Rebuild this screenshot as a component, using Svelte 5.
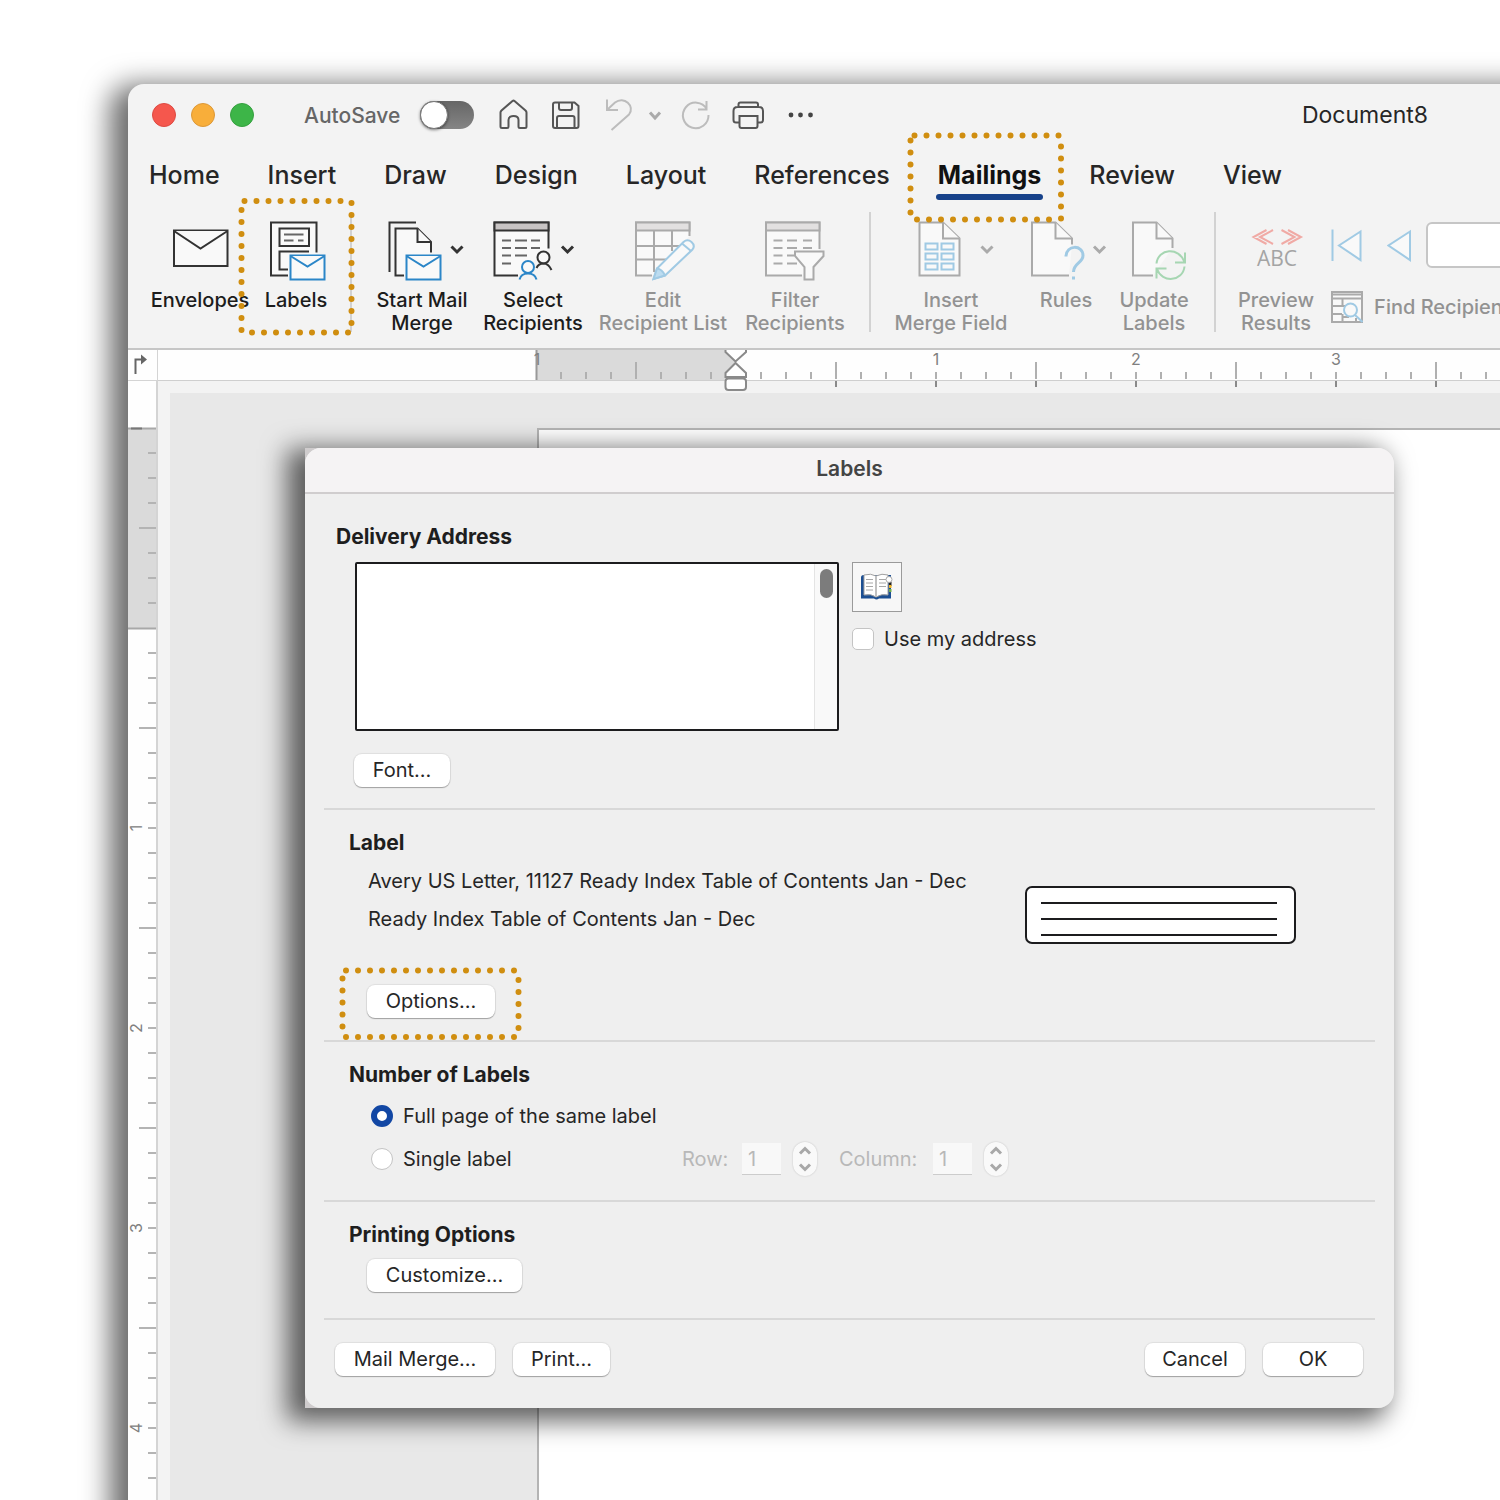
<script>
  const tabs = ['Home', 'Insert', 'Draw', 'Design', 'Layout', 'References', 'Mailings', 'Review', 'View'];

  const range = (from, to, step) => {
    const out = [];
    for (let v = from; v <= to; v += step) out.push(v);
    return out;
  };

  // Ruler marks: one inch is 200 units, with a tick every eighth of an inch.
  const hTicks = range(561, 2611, 25).filter((x) => x !== 736);
  const hStops = range(836, 2536, 100);
  const hNumbers = [1, 2, 3];
  const vTicks = range(453, 2003, 25).filter((y) => y !== 628);
  const vNumbers = [1, 2, 3, 4];

  let autosave = $state(false);
  let useMine = $state(false);
  let mode = $state('full');
  let row = $state('1');
  let column = $state('1');
  let address = $state('');
  let record = $state('');
</script>

{#snippet chevron(x)}
  <path class="chev" d="M{x} 246.5l5.500 5.500l5.500-5.500" />
{/snippet}

{#snippet mail(x)}
  <rect x={x} y="255.500" width="34" height="24" fill="#f8fbfd" />
  <path d="M{x} 256l17 10.500l17-10.500" />
{/snippet}

{#snippet stepper(name)}
  <span class="stepper">
    <button type="button" disabled aria-label="Increase {name}">
      <svg viewBox="0 0 24 17"><path d="M7 11.500l5-5l5 5" /></svg>
    </button>
    <button type="button" disabled aria-label="Decrease {name}">
      <svg viewBox="0 0 24 17"><path d="M7 5.500l5 5l5-5" /></svg>
    </button>
  </span>
{/snippet}

<div class="desktop">
  <main class="window">
    <header class="titlebar">
      <div class="lights">
        <button type="button" class="light red" aria-label="Close"></button>
        <button type="button" class="light amber" aria-label="Minimize"></button>
        <button type="button" class="light green" aria-label="Zoom"></button>
      </div>
      <label class="autosave">
        <span>AutoSave</span>
        <input type="checkbox" role="switch" bind:checked={autosave} />
      </label>
      <div class="quick">
        <button type="button" aria-label="Home">
          <svg width="40" height="34" viewBox="494 98 40 34"><path d="M502 128q-1.500 0-1.500-1.500V112.500q0-1 1-2L512.500 101q1-.8 2 0L525.500 110.500q1 1 1 2V126.500q0 1.500-1.500 1.500H520q-1.500 0-1.500-1.500V120q0-4-5-4t-5 4v6.500q0 1.500-1.500 1.500z" /></svg>
        </button>
        <button type="button" aria-label="Save">
          <svg width="40" height="34" viewBox="546 98 40 34"><path d="M555 102.500H574.500L578.500 106V126q0 2-2 2H555q-2 0-2-2V104.500q0-2 2-2zM559 103V108q0 2 2 2h9q2 0 2-2V103M557 128V118q0-2 2-2H572.500q2 0 2 2V128" /></svg>
        </button>
        <button type="button" class="off" disabled aria-label="Undo">
          <svg width="36" height="34" viewBox="598 98 36 34"><path d="M607 99.500V110H618M607.500 109.500L615 102.500C624 95.500 635.500 106 629 114.500L611.500 130" /></svg>
        </button>
        <button type="button" class="off thick" disabled aria-label="Undo history">
          <svg width="18" height="34" viewBox="646 98 18 34"><path d="M650 112.500l5 5.500l5-5.500" /></svg>
        </button>
        <button type="button" class="off" disabled aria-label="Repeat">
          <svg width="40" height="34" viewBox="676 98 40 34"><path d="M706.500 101V109.500H698M706.800 109A12.800 12.800 0 1 0 708.500 115" /></svg>
        </button>
        <button type="button" aria-label="Print">
          <svg width="40" height="34" viewBox="728 98 40 34"><path d="M738.500 107V104.500q0-2 2-2H756q2 0 2 2V107M739.500 122.500H736q-2.500 0-2.500-2.500V111q0-4 4-4H759q4 0 4 4V120q0 2.500-2.500 2.500H757.500M739.500 116H757.500V126q0 2-2 2H741.500q-2 0-2-2z" /></svg>
        </button>
        <button type="button" class="dots" aria-label="More">
          <svg width="40" height="34" viewBox="780 98 40 34"><circle cx="791" cy="115" r="2.400" /><circle cx="800.500" cy="115" r="2.400" /><circle cx="810.500" cy="115" r="2.400" /></svg>
        </button>
      </div>
      <span class="doc-name">Document8</span>
    </header>

    <nav class="tabs">
      {#each tabs as tab}
        <button type="button" class="tab" class:active={tab === 'Mailings'}>
          {tab}
          {#if tab === 'Mailings'}
            <svg class="dotted around-tab" width="160" height="96" viewBox="906 130 160 96">
              <path d="M914.500 135.500H1059M1061 146.500V219M917 219.500H1050M910.500 140.500V213" />
            </svg>
          {/if}
        </button>
      {/each}
    </nav>

    <section class="ribbon" aria-label="Mailings">
      <button type="button" class="tool">
        <svg width="100" height="70" viewBox="150 215 100 70"><rect x="174" y="230.500" width="53.500" height="35.500" /><path d="M174 231l26.500 17.500l27-17.500" /></svg>
        <span>Envelopes</span>
      </button>
      <button type="button" class="tool w-labels">
        <svg width="92" height="70" viewBox="250 215 92 70">
          <path d="M271 222.500h45.500v53h-45.500z" stroke="none" />
          <path d="M316.500 252.500V222.500H271V275.500H288" /><rect x="279.500" y="228.500" width="29.500" height="17.500" />
          <path class="thin" d="M284 234.500h19.500M284 240.500h9.500M298 240.500h5.500M284 257.500h4M284 263.500h4" />
          <path d="M309 251.500H279.500V269.500H288" />
          <g class="blue">{@render mail(290.5)}</g>
        </svg>
        <span>Labels</span>
        <svg class="dotted around-tool" width="118" height="140" viewBox="237 198 118 140">
          <path d="M244.500 202H342M351.500 204V325M252 333.500H349M241.500 211V332" />
        </svg>
      </button>
      <hr class="faint" />
      <button type="button" class="tool w-start">
        <svg width="100" height="70" viewBox="372 215 100 70">
          <path d="M416 222.500H389.500V272" fill="none" /><path d="M404 275.500H395.500V228.500H417.500L431 242V252.500" /><path d="M417.500 228.500V242H431" />
          <g class="blue">{@render mail(406.5)}</g>
          {@render chevron(451.5)}
        </svg>
        <span>Start Mail<br />Merge</span>
      </button>
      <button type="button" class="tool w-select">
        <svg width="108" height="70" viewBox="479 215 108 70">
          <path d="M548.500 248.500V222.500H494.500V275.500H518" /><rect x="494.500" y="222.500" width="54" height="8" fill="#c8c4c4" />
          <path class="thin" d="M502 240.500h9M515 240.500h12M531 240.500h9M502 248h9M515 248h12M531 248h9M502 255.500h9M515 255.500h12M502 263.500h9" />
          <circle cx="543.500" cy="257.500" r="6" fill="none" /><path d="M536.500 268Q538.500 263.500 543.500 263.500T551.500 270" fill="none" />
          <g class="blue"><circle cx="528" cy="267" r="6" fill="none" /><path d="M519.500 279.500Q521 273.500 528 273.500T536.500 279.500" fill="none" /></g>
          {@render chevron(562)}
        </svg>
        <span>Select<br />Recipients</span>
      </button>
      <button type="button" class="tool off w-edit" disabled>
        <svg width="134" height="70" viewBox="596 215 134 70">
          <path d="M689.500 236V222.500H636V275.500H652" /><rect x="636" y="222.500" width="53.500" height="8" fill="#e2e0e0" />
          <path d="M636 246H679M636 259.500H666M654 230.500V272M672 230.500V251" fill="none" />
          <path class="sky" d="M653.500 279L657 268.500L683.500 242Q687.500 238.500 691.500 242T692.500 249.500L665 275.500z" />
          <path class="sky" d="M653.500 279L657 268.500Q662 269 665 275.500z" fill="#bcdcf0" /><path class="sky" d="M682 243.500l9 7.500" />
        </svg>
        <span>Edit<br />Recipient List</span>
      </button>
      <button type="button" class="tool off w-filter" disabled>
        <svg width="102" height="70" viewBox="744 215 102 70">
          <path d="M819.500 249V222.500H766V275.500H802" /><rect x="766" y="222.500" width="53.500" height="8" fill="#e2e0e0" />
          <path class="thin" d="M773.500 240.500h9M787 240.500h10M803 240.500h9M773.500 248h9M787 248h10M803 248h9M773.500 255.500h9M787 255.500h7M773.500 263.500h9M787 263.500h10" />
          <path d="M795 251.500H823.500V256L813.500 267V279.500H804.500V267L795 256z" />
        </svg>
        <span>Filter<br />Recipients</span>
      </button>
      <hr />
      <button type="button" class="tool off w-field" disabled>
        <svg width="116" height="70" viewBox="893 215 116 70">
          <path d="M943 222.500H919.500V275.500H959.500V238.500z" /><path d="M943 222.500V238.500H959.500" />
          {#each [243.5, 253.5, 263.5] as y}
            <rect class="sky" x="925.500" {y} width="12" height="6" /><rect class="sky" x="941.500" {y} width="12" height="6" />
          {/each}
          {@render chevron(981.5)}
        </svg>
        <span>Insert<br />Merge Field</span>
      </button>
      <button type="button" class="tool off w-rules" disabled>
        <svg width="84" height="70" viewBox="1024 215 84 70">
          <path d="M1069 275.500H1032V222.500H1055.500L1072 238.500V244.500" /><path d="M1055.500 222.500V238.500H1072" />
          <path class="sky heavy" d="M1066 256.500C1066 244.500 1083 244.500 1083 255.500C1083 263 1073.500 263 1073.500 272M1073.500 276.500v3" fill="none" />
          {@render chevron(1094)}
        </svg>
        <span>Rules</span>
      </button>
      <button type="button" class="tool off w-update" disabled>
        <svg width="74" height="70" viewBox="1117 215 74 70">
          <path d="M1153 275.500H1133V222.500H1156.500L1172.500 238.500V248" /><path d="M1156.500 222.500V238.500H1172.500" />
          <path class="mint" d="M1156.500 263.500C1158 248.500 1179 246.500 1184.500 262M1185 252.500V262.500H1175M1184.500 266.500C1183 281.500 1162 283.500 1157 269M1156.500 278.500V268.500H1166.500" fill="none" />
        </svg>
        <span>Update<br />Labels</span>
      </button>
      <hr />
      <button type="button" class="tool off w-preview" disabled>
        <svg width="76" height="70" viewBox="1239 215 76 70">
          <path class="rose" d="M1267.500 230L1254.500 237L1267.500 244M1274 230L1261 237L1274 244M1282.500 230L1295.500 237L1282.500 244M1289 230L1302 237L1289 244" fill="none" />
          <text x="1278" y="266" text-anchor="middle">ABC</text>
        </svg>
        <span>Preview<br />Results</span>
      </button>
      <div class="records">
        <div class="record-nav">
          <button type="button" disabled aria-label="First record">
            <svg width="32" height="34" viewBox="1332 228 32 34"><path class="sky" d="M1333.500 229.500V261M1361.500 231.500L1340 245.500L1361.500 260z" /></svg>
          </button>
          <button type="button" disabled aria-label="Previous record">
            <svg width="25" height="34" viewBox="1387 228 25 34"><path class="sky" d="M1410 231.500L1388.500 245.500L1410 260z" /></svg>
          </button>
          <input type="text" aria-label="Record number" bind:value={record} />
        </div>
        <button type="button" class="find off" disabled>
          <svg width="32" height="34" viewBox="1332 290 32 34">
            <rect x="1333" y="292" width="30" height="30" /><path d="M1333 298.500H1363M1333 306H1343M1333 314H1343M1352 306H1343.500V299M1343.500 314V322M1333 294.500H1363M1350 317H1343M1357 318V322" />
            <circle class="sky" cx="1351.500" cy="310" r="6.500" /><path class="sky" d="M1356 315L1363.500 322" />
          </svg>
          <span>Find Recipient</span>
        </button>
      </div>
    </section>

    <div class="ruler-row">
      <div class="corner">
        <svg width="29" height="31" viewBox="128 349 29 31"><path d="M135.500 373V358.500H142" fill="none" stroke="#666" stroke-width="2" /><path d="M141 353.500L147 358.500L141 363.500z" fill="#666" /></svg>
      </div>
      <svg class="h-ruler" width="100%" height="43">
        <g transform="translate(-158 -350)">
          <rect x="157" y="349" width="3000" height="31" fill="#fefefe" />
          <rect x="536" y="349" width="200" height="31" fill="#dadada" />
          <path d="M157 380.500H3200" stroke="#cfcfcf" />
          <path d="M536.500 350V380" stroke="#999" stroke-width="2" />
          {#each hTicks as x}
            <path d="M{x} {(x - 536) % 200 === 100 ? 362 : 372}V379" stroke="#b0b0b0" stroke-width="2" />
          {/each}
          {#each hStops as x}
            <path d="M{x} 381V387" stroke="#8a8a8a" stroke-width="2" />
          {/each}
          <text x="537" y="365" text-anchor="middle">1</text>
          {#each hNumbers as n}
            <text x={736 + n * 200} y="365" text-anchor="middle">{n}</text>
          {/each}
          <path class="marker" d="M725.500 350V352L735.500 361.500L746 352V350" />
          <path class="marker" d="M735.500 363L725.500 373V377H746V373z" />
          <rect class="marker" x="725.500" y="378.500" width="20.500" height="11.500" rx="3" />
        </g>
      </svg>
    </div>

    <div class="workspace">
      <svg class="v-ruler" width="30" height="100%">
        <g transform="translate(-128 -381)">
          <rect x="128" y="381" width="29" height="3000" fill="#fefefe" />
          <rect x="128" y="428" width="29" height="200" fill="#dadada" />
          <path d="M128 428.500H157M128 628.500H157" stroke="#a8a8a8" stroke-width="2" />
          {#each vTicks as y}
            <path d="M{(y - 428) % 200 === 100 ? 139 : 148} {y}H156" stroke="#b4b4b4" stroke-width="2" />
          {/each}
          {#each vNumbers as n}
            <text transform="translate(142 {628 + n * 200}) rotate(-90)" text-anchor="middle">{n}</text>
          {/each}
          <path d="M131 428.500H142" stroke="#777" stroke-width="2" />
          <path d="M157 381V3000" stroke="#d4d4d4" stroke-width="2" />
        </g>
      </svg>
      <div class="canvas">
        <div class="sheet"></div>
      </div>
    </div>

    <div class="dialog-shell">
      <div class="dialog" role="dialog" aria-labelledby="dialog-title">
        <h1 id="dialog-title">Labels</h1>

        <section class="part delivery">
          <h2>Delivery Address</h2>
          <div class="address-row">
            <div class="address">
              <textarea aria-label="Delivery Address" bind:value={address}></textarea>
              <div class="gutter"><span></span></div>
            </div>
            <div class="address-side">
              <button type="button" class="book" aria-label="Address book">
                <svg width="34" height="28" viewBox="0 0 34 28">
                  <path d="M1 4.500Q1 2 3.500 2H31V25.500H19Q16.500 27.500 14 25.500H1z" fill="#1c4f93" />
                  <path d="M29 9h2.500v4h-2.500z" fill="#222" /><path d="M29 12h2.500v3h-2.500z" fill="#f0b323" /><path d="M29 16h2.500v3h-2.500z" fill="#6fae4e" />
                  <path d="M4 2Q11 0 16 3Q22 0 28 2V22Q22 20.500 16 24Q11 20.500 4 22z" fill="#fff" stroke="#a0a0a0" />
                  <circle cx="29" cy="6.500" r="3" fill="#fff" stroke="#aaa" />
                  <path d="M16 3V24" stroke="#c0c0c0" stroke-width="2" />
                  <path d="M6 6.500h7M6 10h7M6 13.500h7M6 17h7M19 6.500h7M19 10h7M19 13.500h7" stroke="#a8a8a8" />
                </svg>
              </button>
              <label class="check"><input type="checkbox" bind:checked={useMine} />Use my address</label>
            </div>
          </div>
          <button type="button" class="push font">Font...</button>
        </section>

        <section class="part product">
          <h2>Label</h2>
          <div class="product-row">
            <div class="product-text">
              <p>Avery US Letter, 11127 Ready Index Table of Contents Jan - Dec</p>
              <p>Ready Index Table of Contents Jan - Dec</p>
            </div>
            <div class="sample"><i></i><i></i><i></i></div>
          </div>
          <button type="button" class="push options">
            Options...
            <svg class="dotted around-push" width="184" height="76" viewBox="338 965 184 76">
              <path d="M345 969.500H514M517.500 979V1028M345 1036H514M341.500 977.500V1027" />
            </svg>
          </button>
        </section>

        <section class="part count">
          <h2>Number of Labels</h2>
          <label class="radio"><input type="radio" name="count" value="full" bind:group={mode} />Full page of the same label</label>
          <div class="single-row">
            <label class="radio single"><input type="radio" name="count" value="single" bind:group={mode} />Single label</label>
            <label class="num" for="row-number">Row:</label>
            <input id="row-number" class="cell" type="text" disabled bind:value={row} />
            {@render stepper('row')}
            <label class="num second" for="column-number">Column:</label>
            <input id="column-number" class="cell" type="text" disabled bind:value={column} />
            {@render stepper('column')}
          </div>
        </section>

        <section class="part printing">
          <h2>Printing Options</h2>
          <button type="button" class="push customize">Customize...</button>
        </section>

        <footer>
          <button type="button" class="push merge">Mail Merge...</button>
          <button type="button" class="push print">Print...</button>
          <button type="button" class="push cancel">Cancel</button>
          <button type="button" class="push ok">OK</button>
        </footer>
      </div>
    </div>
  </main>
</div>

<style>
  :global(body) {
    margin: 0;
    background: #fff;
  }

  .desktop {
    box-sizing: border-box;
    display: flex;
    height: 100vh;
    min-height: 1440px;
    padding: 84px 0 0 128px;
    overflow: hidden;
    font-family: Inter, 'Liberation Sans', sans-serif;
    color: #262626;
  }

  button,
  input,
  textarea {
    font: inherit;
    color: inherit;
    margin: 0;
  }

  button {
    padding: 0;
    border: 0;
    background: none;
  }

  svg {
    display: block;
    flex: none;
  }

  /* The window runs past the right and bottom edges of the desktop. */
  .window {
    position: relative;
    flex: 1;
    min-width: 0;
    margin: 0 -60px -60px 0;
    display: flex;
    flex-direction: column;
    background: #f3f3f3;
    border-radius: 16px 0 0 0;
    box-shadow: -12px 7px 28px 6px rgba(0, 0, 0, 0.58);
  }

  /* Title bar */
  .titlebar {
    display: flex;
    align-items: center;
    height: 62px;
    padding: 0 132px 0 24px;
  }

  .lights {
    display: flex;
    gap: 15px;
    margin-right: 50px;
  }

  .light {
    box-sizing: border-box;
    width: 24px;
    height: 24px;
    border-radius: 50%;
    border: 1px solid;
  }

  .red { background: #f5574d; border-color: #dd4a42; }
  .amber { background: #f8ae3a; border-color: #dc9838; }
  .green { background: #3db548; border-color: #35a03f; }

  .autosave {
    display: flex;
    align-items: center;
    justify-content: space-between;
    width: 170px;
    margin-right: 20px;
    font-size: 21px;
    font-weight: 500;
    color: #666;
  }

  .autosave input {
    appearance: none;
    position: relative;
    width: 54px;
    height: 28px;
    border-radius: 14px;
    background: linear-gradient(#666, #858585);
  }

  .autosave input::before {
    content: '';
    box-sizing: border-box;
    position: absolute;
    inset: 0 auto 0 0;
    width: 28px;
    border-radius: 50%;
    border: 1px solid #777;
    background: #fff;
    box-shadow: 0 1px 3px rgba(0, 0, 0, 0.5);
  }

  .quick {
    display: flex;
    gap: 12px;
  }

  .quick path {
    fill: none;
    stroke: #555;
    stroke-width: 2;
  }

  .quick .off path { stroke: #bcbcbc; }
  .quick .thick path { stroke: #aaa; stroke-width: 3; }
  .quick circle { fill: #444; }

  .doc-name {
    margin-left: auto;
    font-size: 23px;
    line-height: 28px;
  }

  /* Tabs */
  .tabs {
    display: flex;
    gap: 48px;
    box-sizing: border-box;
    height: 57px;
    padding: 13px 21px 0;
  }

  .tab {
    position: relative;
    height: 32px;
    font-size: 25px;
    line-height: 32px;
    font-weight: 500;
    white-space: nowrap;
  }

  .tab.active {
    font-weight: 700;
    color: #111;
  }

  .tab.active::after {
    content: '';
    position: absolute;
    left: -2px;
    right: -2px;
    bottom: -9px;
    height: 6px;
    border-radius: 3px;
    background: #17428a;
  }

  .dotted {
    position: absolute;
    left: 50%;
    top: 50%;
    transform: translate(-50%, -50%);
    z-index: 1;
    pointer-events: none;
  }

  .dotted path {
    fill: none;
    stroke: #d08e10;
    stroke-width: 6;
    stroke-linecap: round;
    stroke-dasharray: 0 12;
  }

  .around-tab { margin: 3px 0 0 -4px; }
  .around-tool { margin-top: -6px; }
  .around-push { margin-top: 2px; }

  /* Ribbon */
  .ribbon {
    display: flex;
    align-items: flex-start;
    box-sizing: border-box;
    height: 147px;
    padding: 9px 0 0 22px;
    border-bottom: 2px solid #c6c6c6;
    color: #1c1c1c;
  }

  .tool {
    position: relative;
    display: flex;
    flex: none;
    flex-direction: column;
    align-items: center;
    height: 122px;
    padding-top: 3px;
    font-size: 20px;
    line-height: 23px;
    font-weight: 500;
    white-space: nowrap;
  }

  .tool > svg:first-child { margin-bottom: 4px; }
  .tool span { display: block; }

  .w-start { margin-left: 20px; }
  .w-select { margin-left: 7px; }
  .w-edit { margin-left: 9px; }
  .w-filter { margin-left: 14px; }
  .w-rules { margin-left: 15px; }
  .w-update { margin-left: 9px; }
  .w-start, .w-field, .w-update, .w-preview, .w-labels { align-items: center; }

  .ribbon .off { color: #929292; }

  .tool rect,
  .tool path,
  .tool circle,
  .find rect,
  .find path,
  .find circle,
  .record-nav path {
    fill: #f9f9f9;
    stroke: #333;
    stroke-width: 2;
  }

  .tool rect[fill='#c8c4c4'] { fill: #c8c4c4; }
  .tool rect[fill='#e2e0e0'] { fill: #e2e0e0; }
  .tool path[fill='#bcdcf0'] { fill: #bcdcf0; }
  .tool path[stroke='none'] { stroke: none; }
  .tool path[fill='none'],
  .find path { fill: none; }

  .ribbon .off rect,
  .ribbon .off path,
  .find rect { stroke: #aaa; }

  .tool .thin { stroke: #666; }
  .tool .blue rect,
  .tool .blue path,
  .tool .blue circle { stroke: #2b86c8; }
  .tool .chev { fill: none; stroke-width: 3; }

  .ribbon .off .sky,
  .ribbon .off circle,
  .record-nav .sky { stroke: #a0cae4; }
  .tool .heavy { stroke-width: 3; }
  .ribbon .off .mint { stroke: #a6d6b2; }
  .ribbon .off .rose { stroke: #f0aaa5; }

  .tool text {
    font-family: 'Open Sans', sans-serif;
    font-size: 21px;
    font-weight: 400;
    fill: #a4a4a4;
  }

  .tool .dotted path {
    fill: none;
    stroke: #d08e10;
    stroke-width: 6;
  }

  hr {
    flex: none;
    width: 2px;
    height: 120px;
    margin: 0 22px 0 23px;
    border: 0;
    background: #d2d2d2;
  }

  hr.faint {
    margin: 0 0 0 8px;
  }

  .records {
    flex: 1;
    min-width: 0;
    margin-left: 17px;
    padding-top: 10px;
  }

  .record-nav {
    display: flex;
    align-items: center;
    gap: 24px;
    margin-bottom: 22px;
  }

  .record-nav input {
    box-sizing: border-box;
    flex: none;
    width: 120px;
    height: 46px;
    margin-left: -10px;
    border: 2px solid #c6c6c6;
    border-radius: 6px;
    background: #fff;
  }

  .find {
    display: flex;
    align-items: center;
    gap: 11px;
    font-size: 20px;
    line-height: 24px;
    font-weight: 500;
    white-space: nowrap;
  }

  /* Rulers */
  .ruler-row {
    display: flex;
    height: 31px;
  }

  .corner {
    flex: none;
    width: 29px;
    border-right: 1px solid #d4d4d4;
    border-bottom: 1px solid #d4d4d4;
    height: 30px;
    background: #fefefe;
  }

  .h-ruler {
    position: relative;
    z-index: 1;
    flex: 1;
    min-width: 0;
  }

  .ruler-row text,
  .v-ruler text {
    font-size: 16px;
    fill: #808080;
  }

  .marker {
    fill: #fff;
    stroke: #8a8a8a;
    stroke-width: 2;
  }

  .workspace {
    flex: 1;
    display: flex;
    min-height: 0;
  }

  .v-ruler {
    height: auto;
    overflow: hidden;
  }

  .canvas {
    flex: 1;
    display: flex;
    border: solid #f3f3f3;
    border-width: 12px 0 0 12px;
    padding: 35px 0 0 367px;
    background: #e8e8e8;
  }

  .sheet {
    flex: 1;
    border: solid #b4b4b4;
    border-width: 2px 0 0 2px;
    background: #fff;
  }

  /* Dialog */
  .dialog-shell {
    position: absolute;
    z-index: 2;
    left: 177px;
    right: 166px;
    top: 364px;
    border-radius: 0 16px 16px 0;
    background: #cfcccd;
    box-shadow: -12px 7px 26px 6px rgba(0, 0, 0, 0.6);
  }

  .dialog {
    overflow: hidden;
    border-radius: 16px;
    background: #efefef;
    font-size: 20px;
    line-height: 24px;
  }

  h1 {
    margin: 0;
    padding: 9px 0 11px;
    border-bottom: 2px solid #d0cdce;
    background: #f5f3f4;
    text-align: center;
    font-size: 21px;
    line-height: 24px;
    font-weight: 600;
    color: #444;
  }

  h2 {
    margin: 0;
    font-size: 21px;
    line-height: 24px;
    font-weight: 700;
    color: #1e1e1e;
  }

  .part {
    display: flex;
    flex-direction: column;
    align-items: flex-start;
    margin: 0 19px;
    padding: 21px 25px 22px;
    border-bottom: 2px solid #d8d8d8;
  }

  .push {
    position: relative;
    height: 33px;
    padding: 0 16px;
    border-radius: 8px;
    background: #fff;
    box-shadow: 0 0 1px 1px rgba(0, 0, 0, 0.07), 0 1px 1px rgba(0, 0, 0, 0.28);
    line-height: 33px;
    white-space: nowrap;
  }

  .delivery {
    padding: 31px 12px 21px;
  }

  .address-row {
    display: flex;
    gap: 13px;
    margin: 13px 0 23px 19px;
  }

  .address {
    box-sizing: border-box;
    display: flex;
    width: 484px;
    height: 169px;
    border: 2px solid #1c1c1e;
    border-radius: 2px;
    background: #fff;
  }

  .address textarea {
    flex: 1;
    border: 0;
    padding: 6px;
    resize: none;
    outline: 0;
    background: none;
  }

  .gutter {
    width: 22px;
    padding-top: 5px;
    border-left: 1px solid #e4e4e4;
    background: #f9f9f9;
  }

  .gutter span {
    display: block;
    width: 13px;
    height: 29px;
    margin-left: 5px;
    border-radius: 7px;
    background: #7c7c7c;
  }

  .book {
    display: flex;
    align-items: center;
    justify-content: center;
    box-sizing: border-box;
    width: 50px;
    height: 50px;
    margin-bottom: 15px;
    border: 1px solid #9a9a9a;
    background: #f7f7f7;
  }

  .check,
  .radio {
    display: flex;
    align-items: center;
    gap: 10px;
  }

  .check input,
  .radio input {
    appearance: none;
    box-sizing: border-box;
    width: 22px;
    height: 22px;
    border: 1px solid #c4c4c4;
    border-radius: 5px;
    background: #fff;
  }

  .radio input { border-radius: 50%; }

  .radio input:checked {
    border: 6px solid #1247a4;
  }

  .font { margin-left: 18px; min-width: 96px; }

  .product-row {
    display: flex;
    justify-content: space-between;
    align-self: stretch;
    margin: 14px 54px 40px 19px;
  }

  .product-text p {
    margin: 0 0 14px;
    white-space: nowrap;
  }

  .sample {
    box-sizing: border-box;
    display: flex;
    flex-direction: column;
    gap: 14px;
    width: 271px;
    height: 58px;
    margin-top: 17px;
    padding: 14px 17px 0 14px;
    border: 2px solid #1c1c1e;
    border-radius: 7px;
    background: #fff;
  }

  .sample i {
    height: 2px;
    background: #1c1c1e;
  }

  .options,
  .customize { margin-left: 18px; }

  .options { min-width: 128px; }

  .count { padding-bottom: 24px; }

  .count .radio { margin-left: 22px; }
  .count h2 { margin-bottom: 17px; }

  .single-row {
    display: flex;
    align-items: center;
    margin-top: 14px;
  }

  .single { width: 311px; }

  .num { width: 60px; color: #b8b8b8; }
  .num.second { width: 94px; margin-left: 22px; }

  .cell {
    box-sizing: border-box;
    width: 39px;
    height: 32px;
    padding: 0 6px;
    border: 0;
    border-bottom: 1px solid #ccc;
    background: #f8f8f8;
    color: #b8b8b8;
  }

  .stepper {
    display: flex;
    flex-direction: column;
    margin-left: 12px;
    border-radius: 12px;
    background: #f9f9f9;
    box-shadow: 0 0 2px rgba(0, 0, 0, 0.2);
  }

  .stepper button {
    width: 24px;
    height: 17px;
  }

  .stepper path {
    fill: none;
    stroke: #a8a8a8;
    stroke-width: 3;
  }

  .printing { padding-bottom: 26px; }
  .customize { margin-top: 12px; min-width: 155px; }

  footer {
    display: flex;
    gap: 18px;
    padding: 23px 31px 32px 30px;
  }

  .merge { min-width: 160px; }
  .print { min-width: 97px; }
  .cancel { margin-left: auto; min-width: 100px; }
  .ok { min-width: 100px; }
</style>
